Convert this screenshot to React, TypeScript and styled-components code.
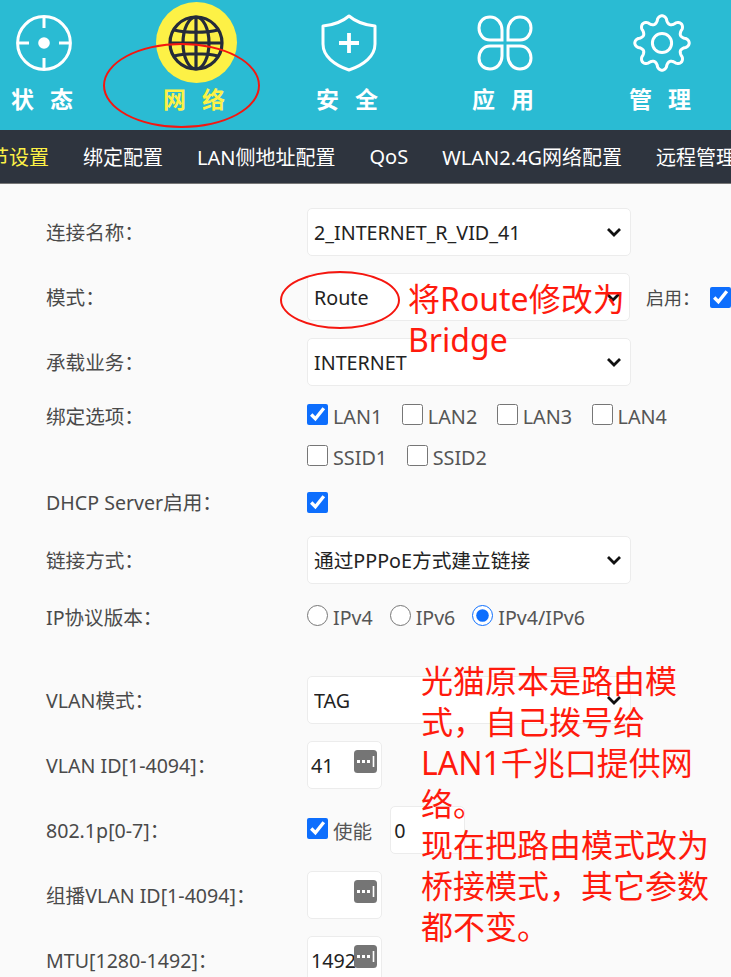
import styled, { createGlobalStyle } from 'styled-components';

const GlobalStyle = createGlobalStyle`
  html, body {
    margin: 0;
    height: 100%;
    overflow: hidden;
    background: #fafafa;
  }
  * { box-sizing: border-box; }
`;

const FONT = '"Noto Sans", "Noto Sans CJK SC", sans-serif';
const CHEVRON =
  "url(\"data:image/svg+xml,%3Csvg xmlns='http://www.w3.org/2000/svg' viewBox='0 0 16 10'%3E%3Cpath d='M2 2l6 6 6-6' fill='none' stroke='%23111' stroke-width='2.8'/%3E%3C/svg%3E\")";

// wavy 8 tooth outline for the gear
const gearPath = () => {
  const pts: string[] = [];
  for (let i = 0; i < 240; i++) {
    const a = (i / 240) * Math.PI * 2;
    const wave = Math.cos(a * 8);
    const r = 23.6 + 3.6 * Math.sign(wave) * Math.pow(Math.abs(wave), 0.7);
    pts.push(`${(29 + r * Math.sin(a)).toFixed(2)} ${(29 - r * Math.cos(a)).toFixed(2)}`);
  }
  return `M${pts.join('L')}Z`;
};

const StatusIcon = () => (
  <svg width='56' height='56' viewBox='0 0 56 56' fill='none' stroke='#fff' strokeWidth='3'>
    <circle cx='28' cy='28' r='26.4' />
    <path d='M28 2v11M28 43v11M2 28h11M43 28h11' />
    <circle cx='28' cy='28' r='5.8' fill='#fff' stroke='none' />
  </svg>
);

const GlobeIcon = () => (
  <svg width='56' height='56' viewBox='0 0 56 56' fill='none' stroke='#252b3a' strokeWidth='3.2'>
    <circle cx='28' cy='28' r='26' />
    <ellipse cx='28' cy='28' rx='13' ry='26' />
    <path d='M28 2v52M2 28h52M6 15c12 3 32 3 44 0M6 41c12-3 32-3 44 0' />
  </svg>
);

const ShieldIcon = () => (
  <svg width='56' height='58' viewBox='0 0 56 58' fill='none' stroke='#fff' strokeWidth='3'>
    <path d='M28 2c7 6 15 9 26 10v18c0 12-11 21-26 26C13 51 2 42 2 30V12c11-1 19-4 26-10z' strokeLinejoin='round' />
    <path d='M28 19v20M18 29h20' strokeWidth='3.8' />
  </svg>
);

const AppsIcon = () => (
  <svg width='56' height='56' viewBox='0 0 56 56' fill='none' stroke='#fff' strokeWidth='3'>
    <path d='M25 25H13C6 25 2 19 2 13 2 6 7 2 13 2c7 0 12 6 12 13z' />
    <path d='M31 25h12c7 0 11-6 11-12 0-7-5-11-11-11-7 0-12 6-12 13z' />
    <path d='M25 31H13C6 31 2 37 2 43c0 7 5 11 11 11 7 0 12-6 12-13z' />
    <path d='M31 31h12c7 0 11 6 11 12 0 7-5 11-11 11-7 0-12-6-12-13z' />
  </svg>
);

const GearIcon = () => (
  <svg width='58' height='58' viewBox='0 0 58 58' fill='none' stroke='#fff' strokeWidth='3' strokeLinejoin='round'>
    <path d={gearPath()} />
    <circle cx='29' cy='29' r='9.6' />
  </svg>
);

const SpinIcon = () => (
  <svg width='23' height='23' viewBox='0 0 23 23'>
    <rect width='23' height='23' rx='3.5' fill='#757575' />
    <path d='M3 10h3v3H3zM8 10h3v3H8zM13 10h3v3h-3z' fill='#fff' />
    <path d='M19.5 6v11' stroke='#fff' strokeWidth='1.6' />
  </svg>
);

const navItems = [
  { label: '状态', icon: <StatusIcon />, width: 152 },
  { label: '网络', icon: <GlobeIcon />, width: 152, active: true },
  { label: '安全', icon: <ShieldIcon />, width: 154 },
  { label: '应用', icon: <AppsIcon />, width: 158 },
  { label: '管理', icon: <GearIcon />, width: 156 },
];

const subItems = ['节设置', '绑定配置', 'LAN侧地址配置', 'QoS', 'WLAN2.4G网络配置', '远程管理'];

const App = () => {
  return (
    <StyledRoot>
      <GlobalStyle />
      <Header>
        {navItems.map((item) => (
          <NavItem key={item.label} $width={item.width} $active={item.active}>
            <IconWrap $active={item.active}>{item.icon}</IconWrap>
            <NavLabel>{item.label}</NavLabel>
          </NavItem>
        ))}
      </Header>

      <SubNav>
        {subItems.map((item, i) => (
          <SubLink key={item} $active={i === 0}>
            {item}
          </SubLink>
        ))}
      </SubNav>

      <Form>
        <Row>
          <Label>连接名称：</Label>
          <Select defaultValue='a'>
            <option value='a'>2_INTERNET_R_VID_41</option>
          </Select>
        </Row>
        <Row>
          <Label>模式：</Label>
          <Select defaultValue='a'>
            <option value='a'>Route</option>
          </Select>
          <EnableLabel>启用：</EnableLabel>
          <Check defaultChecked />
        </Row>
        <Row>
          <Label>承载业务：</Label>
          <Select defaultValue='a'>
            <option value='a'>INTERNET</option>
          </Select>
        </Row>
        <Row $top>
          <TopLabel>绑定选项：</TopLabel>
          <Options>
            <OptionLine>
              <CheckItem>
                <Check defaultChecked />
                LAN1
              </CheckItem>
              <CheckItem>
                <Check />
                LAN2
              </CheckItem>
              <CheckItem>
                <Check />
                LAN3
              </CheckItem>
              <CheckItem>
                <Check />
                LAN4
              </CheckItem>
            </OptionLine>
            <OptionLine>
              <CheckItem>
                <Check />
                SSID1
              </CheckItem>
              <CheckItem>
                <Check />
                SSID2
              </CheckItem>
            </OptionLine>
          </Options>
        </Row>
        <Row $height={34}>
          <Label>DHCP Server启用：</Label>
          <Check defaultChecked />
        </Row>
        <Row>
          <Label>链接方式：</Label>
          <Select defaultValue='a'>
            <option value='a'>通过PPPoE方式建立链接</option>
          </Select>
        </Row>
        <Row $height={32}>
          <Label>IP协议版本：</Label>
          <RadioGroup>
            <CheckItem>
              <Radio name='ip' />
              IPv4
            </CheckItem>
            <CheckItem>
              <Radio name='ip' />
              IPv6
            </CheckItem>
            <CheckItem>
              <Radio name='ip' defaultChecked />
              IPv4/IPv6
            </CheckItem>
          </RadioGroup>
        </Row>
        <Row $gapTop={26}>
          <Label>VLAN模式：</Label>
          <Select defaultValue='a'>
            <option value='a'>TAG</option>
          </Select>
        </Row>
        <Row>
          <Label>VLAN ID[1-4094]：</Label>
          <NumberBox>
            <NumberInput defaultValue='41' />
            <SpinSlot>
              <SpinIcon />
            </SpinSlot>
          </NumberBox>
        </Row>
        <Row>
          <Label>802.1p[0-7]：</Label>
          <CheckItem>
            <Check defaultChecked />
            使能
          </CheckItem>
          <PriorityInput defaultValue='0' />
        </Row>
        <Row>
          <Label>组播VLAN ID[1-4094]：</Label>
          <NumberBox>
            <NumberInput />
            <SpinSlot>
              <SpinIcon />
            </SpinSlot>
          </NumberBox>
        </Row>
        <Row>
          <Label>MTU[1280-1492]：</Label>
          <NumberBox>
            <NumberInput defaultValue='1492' />
            <SpinSlot>
              <SpinIcon />
            </SpinSlot>
          </NumberBox>
        </Row>
      </Form>

      <Ring $left={103} $top={43} $width={157} $height={85} />
      <Ring $left={280} $top={271} $width={120} $height={58} />
      <RouteNote>
        将Route修改为
        <br />
        Bridge
      </RouteNote>
      <ModeNote>
        光猫原本是路由模
        <br />
        式，自己拨号给
        <br />
        LAN1千兆口提供网
        <br />
        络。
        <br />
        现在把路由模式改为
        <br />
        桥接模式，其它参数
        <br />
        都不变。
      </ModeNote>
    </StyledRoot>
  );
};

const StyledRoot = styled.div`
  position: relative;
  width: 731px;
  height: 977px;
  overflow: hidden;
  background: #fafafa;
  font-family: ${FONT};
`;

// top nav
const Header = styled.header`
  display: flex;
  height: 130px;
  margin-left: -32px;
  background: #2abbd3;
  width: 763px;
`;

const NavItem = styled.div<{ $width: number; $active?: boolean }>`
  flex: 0 0 ${(p) => p.$width}px;
  display: flex;
  flex-direction: column;
  align-items: center;
  color: ${(p) => (p.$active ? '#fdf146' : '#fff')};
`;

const IconWrap = styled.div<{ $active?: boolean }>`
  width: 81px;
  height: 81px;
  margin-top: 2px;
  border-radius: 50%;
  display: flex;
  align-items: center;
  justify-content: center;
  background: ${(p) => (p.$active ? '#fdf146' : 'transparent')};
`;

const NavLabel = styled.div`
  font-size: 23px;
  line-height: 30px;
  font-weight: 700;
  letter-spacing: 16px;
  margin-right: -12px;
  font-family: 'Noto Sans CJK SC', sans-serif;
`;

// sub nav
const SubNav = styled.nav`
  display: flex;
  align-items: center;
  gap: 34px;
  height: 54px;
  margin-left: -11px;
  width: 742px;
  background: #2e343e;
  border-bottom: 1px solid #777;
  white-space: nowrap;
  overflow: hidden;
`;

const SubLink = styled.a<{ $active?: boolean }>`
  font-size: 20px;
  color: ${(p) => (p.$active ? '#fdf146' : '#fff')};
`;

// form
const Form = styled.form`
  display: flex;
  flex-direction: column;
  gap: 17px;
  padding: 24px 0 0 46px;
`;

const Row = styled.div<{ $top?: boolean; $height?: number; $gapTop?: number }>`
  display: flex;
  align-items: ${(p) => (p.$top ? 'flex-start' : 'center')};
  flex-shrink: 0;
  min-height: ${(p) => (p.$height ? p.$height : p.$top ? 65 : 48)}px;
  margin-top: ${(p) => p.$gapTop ?? 0}px;
`;

const Label = styled.label`
  flex: 0 0 261px;
  padding-top: 2px;
  font-size: 19.6px;
  line-height: 28px;
  color: #4a4a4a;
  white-space: nowrap;
`;

const TopLabel = styled(Label)`
  padding-top: 0;
`;

const Select = styled.select`
  appearance: none;
  width: 324px;
  height: 48px;
  padding: 0 6px;
  border: 1px solid #ececec;
  border-radius: 5px;
  background: #fff ${CHEVRON} no-repeat right 8px center / 16px 10px;
  font: 19.7px ${FONT};
  color: #222;
`;

const EnableLabel = styled.span`
  flex: 0 0 54px;
  margin: 0 10px 0 16px;
  font-size: 18px;
  color: #4a4a4a;
  white-space: nowrap;
`;

const Check = styled.input.attrs({ type: 'checkbox' })`
  flex: 0 0 21px;
  width: 21px;
  height: 21px;
  margin: 0;
  accent-color: #0d6efd;
`;

const Radio = styled.input.attrs({ type: 'radio' })`
  flex: 0 0 21px;
  width: 21px;
  height: 21px;
  margin: 0;
  accent-color: #0d6efd;
`;

const CheckItem = styled.span`
  display: inline-flex;
  align-items: center;
  gap: 5px;
  font-size: 19.6px;
  color: #555;
  white-space: nowrap;

  input {
    margin-bottom: 4px;
  }
`;

const Options = styled.div`
  display: flex;
  flex-direction: column;
  gap: 19px;
  padding-top: 2px;

  ${CheckItem} {
    font-size: 19.8px;
  }
`;

const OptionLine = styled.div`
  display: flex;
  gap: 19.5px;
  height: 22px;
  align-items: center;
`;

const RadioGroup = styled.div`
  display: flex;
  gap: 17px;
`;

const NumberBox = styled.div`
  position: relative;
  width: 75px;
  height: 48px;
`;

const NumberInput = styled.input`
  width: 100%;
  height: 100%;
  padding: 0 3px;
  border: 1px solid #ececec;
  border-radius: 5px;
  background: #fff;
  font: 19.7px ${FONT};
  color: #222;
`;

const SpinSlot = styled.div`
  position: absolute;
  top: 9px;
  right: 5px;
  display: flex;
`;

const PriorityInput = styled(NumberInput)`
  flex: 0 0 75px;
  width: 75px;
  height: 48px;
  margin-left: 18px;
`;

// red annotations over the page
const Ring = styled.div<{ $left: number; $top: number; $width: number; $height: number }>`
  position: absolute;
  left: ${(p) => p.$left}px;
  top: ${(p) => p.$top}px;
  width: ${(p) => p.$width}px;
  height: ${(p) => p.$height}px;
  border: 2.5px solid #f5160f;
  border-radius: 50%;
`;

const Note = styled.div`
  position: absolute;
  color: #ff1a0d;
  font-family: 'Noto Sans', 'Noto Sans CJK SC', sans-serif;
  font-size: 32px;
  white-space: nowrap;
`;

const RouteNote = styled(Note)`
  left: 408px;
  top: 278px;
  line-height: 41px;
`;

const ModeNote = styled(Note)`
  left: 421px;
  top: 660px;
  line-height: 41px;
`;

export default App;
